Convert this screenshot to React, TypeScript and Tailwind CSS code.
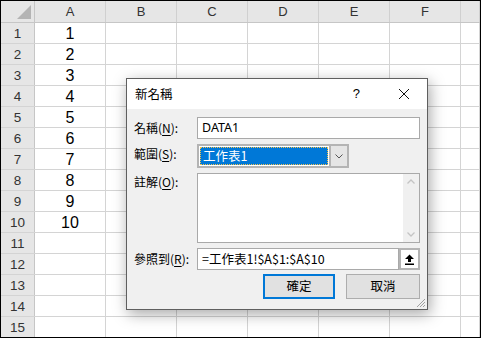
import React from 'react';

const cols = ['A', 'B', 'C', 'D', 'E', 'F', ''];
const rows = Array.from({ length: 15 }, (_, i) => i + 1);

const cjk = { fontFamily: '"Noto Sans CJK TC", "Noto Sans", sans-serif' };

const Label: React.FC<{ text: string; k: string; className?: string }> = ({ text, k, className = '' }) => (
  <div className={`w-[63px] shrink-0 text-[12px] leading-[16px] text-black ${className}`}>
    {text}(<span className="underline underline-offset-2">{k}</span>):
  </div>
);

const Dialog: React.FC = () => (
  <div
    className="absolute left-[125px] top-[77px] w-[302px] h-[232px] border border-[#5f5f5f] bg-[#f0f0f0] shadow-[2px_4px_14px_rgba(0,0,0,0.35)] flex flex-col"
    style={cjk}
  >
    {/* title */}
    <div className="h-[30px] bg-white flex items-center pl-[8px] shrink-0">
      <span className="text-[12.5px] text-black">新名稱</span>
      <span className="ml-auto mr-[38px] text-[13px] text-black" style={{ fontFamily: '"Liberation Sans", sans-serif' }}>?</span>
      <svg width="12" height="12" viewBox="0 0 12 12" className="mr-[17px]">
        <path d="M1 1 L11 11 M11 1 L1 11" stroke="#111" strokeWidth="1" />
      </svg>
    </div>
    <div className="flex flex-col pl-[7px] pr-[7px] pt-[8px]">
      {/* name */}
      <div className="flex items-center h-[22px]">
        <Label text="名稱" k="N" />
        <div className="flex-1 h-[22px] bg-white border border-[#a9a9a9] flex items-center pl-[4px] text-[12.5px] text-black" style={{ fontFamily: '"Noto Sans", sans-serif' }}>
          DATA1
        </div>
      </div>
      {/* scope */}
      <div className="flex items-start h-[24px] mt-[5px]">
        <Label text="範圍" k="S" className="mt-[2px]" />
        <div className="w-[152px] h-[24px] border-2 border-[#b4b4b4] bg-white flex">
          <div className="flex-1 m-[1px] bg-[#0078d7] border border-dotted border-[#f2c14e] flex items-center pl-[2px] text-[12.5px] text-white leading-none">
            工作表1
          </div>
          <div className="w-[18px] bg-[#e5e5e5] border-l-2 border-[#b4b4b4] flex items-center justify-center">
            <svg width="8" height="5" viewBox="0 0 8 5">
              <path d="M0.5 0.5 L4 4 L7.5 0.5" stroke="#555" strokeWidth="1" fill="none" />
            </svg>
          </div>
        </div>
      </div>
      {/* comment */}
      <div className="flex items-start h-[70px] mt-[5px]">
        <Label text="註解" k="O" className="mt-[1px]" />
        <div className="flex-1 h-[70px] bg-white border border-[#a9a9a9] flex justify-end">
          <div className="w-[16px] h-full bg-[#f0f0f0] flex flex-col justify-between items-center py-[5px]">
            <svg width="8" height="5" viewBox="0 0 8 5">
              <path d="M0.5 4.5 L4 1 L7.5 4.5" stroke="#c4c4c4" strokeWidth="1.3" fill="none" />
            </svg>
            <svg width="8" height="5" viewBox="0 0 8 5">
              <path d="M0.5 0.5 L4 4 L7.5 0.5" stroke="#c4c4c4" strokeWidth="1.3" fill="none" />
            </svg>
          </div>
        </div>
      </div>
      {/* refers to */}
      <div className="flex items-center h-[22px] mt-[5px]">
        <Label text="參照到" k="R" />
        <div className="flex-1 h-[22px] bg-white border border-[#a9a9a9] flex items-center pl-[4px] text-[12.5px] text-black">
          =工作表1!$A$1:$A$10
        </div>
        <div className="w-[21px] h-[22px] border-2 border-[#b4b4b4] bg-white flex items-center justify-center">
          <svg width="11" height="11" viewBox="0 0 11 11">
            <path d="M5.5 0.5 L10 5 L7 5 L7 8 L4 8 L4 5 L1 5 Z" fill="#000" />
            <rect x="1" y="9.5" width="9" height="1.5" fill="#000" />
          </svg>
        </div>
      </div>
      {/* buttons */}
      <div className="flex justify-end h-[25px] mt-[4px] gap-[11px]">
        <div className="w-[72px] h-[25px] bg-[#e1e1e1] border-2 border-[#0078d7] flex items-center justify-center text-[12.5px] text-black">
          確定
        </div>
        <div className="w-[74px] h-[25px] bg-[#e1e1e1] border border-[#adadad] flex items-center justify-center text-[12.5px] text-black">
          取消
        </div>
      </div>
    </div>
    {/* resize grip */}
    <svg width="10" height="10" viewBox="0 0 10 10" className="absolute right-[1px] bottom-[1px]">
      <path d="M9 1 L1 9 M9 4 L4 9 M9 7 L7 9" stroke="#a0a0a0" strokeWidth="1" />
    </svg>
  </div>
);

export default function App() {
  return (
    <div className="relative w-[481px] h-[338px] border border-black bg-white overflow-hidden" style={{ fontFamily: '"Liberation Sans", Arial, sans-serif' }}>
      {/* header row */}
      <div className="flex h-[22px] bg-[#e6e6e6] border-b border-[#c6c6c6]">
        <div className="w-[34px] shrink-0 border-r border-[#c6c6c6] relative">
          <div className="absolute right-[3px] bottom-[3px] w-0 h-0 border-l-[14px] border-l-transparent border-b-[14px] border-b-[#b4b4b4]" />
        </div>
        {cols.map((c, i) => (
          <div
            key={i}
            className={`${c ? 'w-[71px]' : 'flex-1'} shrink-0 border-r border-[#d0d0d0] flex items-center justify-center text-[13px] text-[#333]`}
          >
            {c}
          </div>
        ))}
      </div>
      {rows.map((r) => (
        <div key={r} className="flex h-[21px] border-b border-[#d4d4d4]">
          <div className="w-[34px] shrink-0 bg-[#e6e6e6] border-r border-[#c6c6c6] flex items-end justify-center pb-[1px] text-[13.5px] text-[#333] leading-[16px]">
            {r}
          </div>
          {cols.map((c, i) => (
            <div
              key={i}
              className={`${c ? 'w-[71px]' : 'flex-1'} shrink-0 border-r border-[#d4d4d4] flex items-end justify-center text-[16px] leading-[19px] text-black`}
            >
              {i === 0 && r <= 10 ? r : ''}
            </div>
          ))}
        </div>
      ))}
      <Dialog />
    </div>
  );
}
